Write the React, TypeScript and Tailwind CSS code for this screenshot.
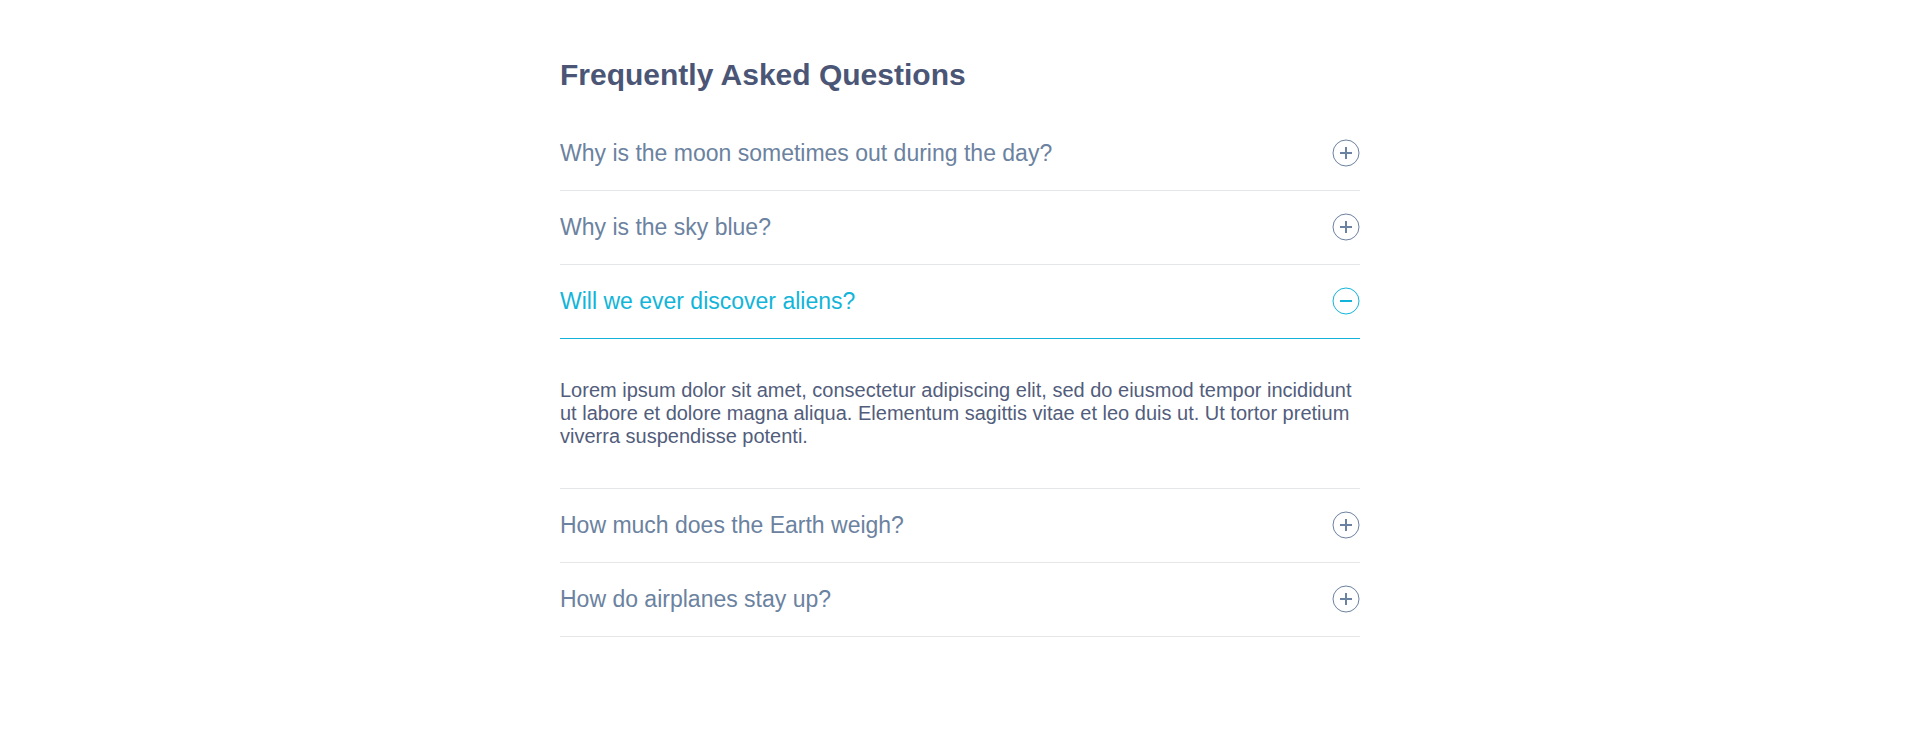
import { useState } from "react";

const faqs = [
  {
    q: "Why is the moon sometimes out during the day?",
    a: "Lorem ipsum dolor sit amet, consectetur adipiscing elit, sed do eiusmod tempor incididunt ut labore et dolore magna aliqua. Elementum sagittis vitae et leo duis ut. Ut tortor pretium viverra suspendisse potenti.",
  },
  {
    q: "Why is the sky blue?",
    a: "Lorem ipsum dolor sit amet, consectetur adipiscing elit, sed do eiusmod tempor incididunt ut labore et dolore magna aliqua. Elementum sagittis vitae et leo duis ut. Ut tortor pretium viverra suspendisse potenti.",
  },
  {
    q: "Will we ever discover aliens?",
    a: "Lorem ipsum dolor sit amet, consectetur adipiscing elit, sed do eiusmod tempor incididunt ut labore et dolore magna aliqua. Elementum sagittis vitae et leo duis ut. Ut tortor pretium viverra suspendisse potenti.",
  },
  {
    q: "How much does the Earth weigh?",
    a: "Lorem ipsum dolor sit amet, consectetur adipiscing elit, sed do eiusmod tempor incididunt ut labore et dolore magna aliqua. Elementum sagittis vitae et leo duis ut. Ut tortor pretium viverra suspendisse potenti.",
  },
  {
    q: "How do airplanes stay up?",
    a: "Lorem ipsum dolor sit amet, consectetur adipiscing elit, sed do eiusmod tempor incididunt ut labore et dolore magna aliqua. Elementum sagittis vitae et leo duis ut. Ut tortor pretium viverra suspendisse potenti.",
  },
];

function ToggleIcon({ open }: { open: boolean }) {
  return (
    <svg width="28" height="28" viewBox="0 0 28 28" fill="none" stroke="currentColor">
      <circle cx="14" cy="14" r="13" strokeWidth="1" />
      <line x1="8" y1="14" x2="20" y2="14" strokeWidth="2" />
      {!open && <line x1="14" y1="8" x2="14" y2="20" strokeWidth="2" />}
    </svg>
  );
}

export default function App() {
  const [openIdx, setOpenIdx] = useState<number | null>(2);

  return (
    <div className="min-h-screen bg-white font-['Liberation_Sans',Arial,sans-serif]">
      <div className="w-[800px] mx-auto pt-[57px]">
        <h2 className="text-[30px] leading-9 font-bold text-[#4b5676] mb-[24px]">
          Frequently Asked Questions
        </h2>

        <div>
          {faqs.map((item, i) => {
            const open = openIdx === i;
            return (
              <div key={i} className="border-b border-[#e5e6e8]">
                <button
                  onClick={() => setOpenIdx(open ? null : i)}
                  className={`w-full h-[73px] box-content flex items-center justify-between pb-0 text-left cursor-pointer ${
                    open ? "text-[#12b5d9] border-b border-[#12b5d9]" : "text-[#6b82a0]"
                  }`}
                >
                  <span className="text-[23px] leading-[26px] -mt-0.5">{item.q}</span>
                  <span className="-mt-0.5">
                    <ToggleIcon open={open} />
                  </span>
                </button>
                {open && (
                  <div className="py-10">
                    <p className="text-[20px] leading-[23px] text-[#525d7c]">{item.a}</p>
                  </div>
                )}
              </div>
            );
          })}
        </div>
      </div>
    </div>
  );
}
